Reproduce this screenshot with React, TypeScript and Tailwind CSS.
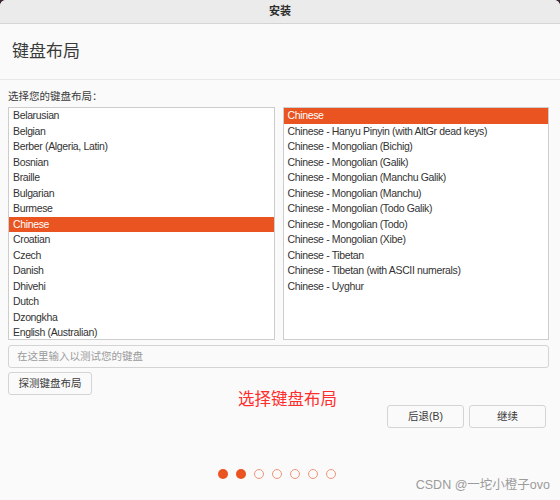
import React from "react";

const leftItems = [
  "Belarusian",
  "Belgian",
  "Berber (Algeria, Latin)",
  "Bosnian",
  "Braille",
  "Bulgarian",
  "Burmese",
  "Chinese",
  "Croatian",
  "Czech",
  "Danish",
  "Dhivehi",
  "Dutch",
  "Dzongkha",
  "English (Australian)",
];

const rightItems = [
  "Chinese",
  "Chinese - Hanyu Pinyin (with AltGr dead keys)",
  "Chinese - Mongolian (Bichig)",
  "Chinese - Mongolian (Galik)",
  "Chinese - Mongolian (Manchu Galik)",
  "Chinese - Mongolian (Manchu)",
  "Chinese - Mongolian (Todo Galik)",
  "Chinese - Mongolian (Todo)",
  "Chinese - Mongolian (Xibe)",
  "Chinese - Tibetan",
  "Chinese - Tibetan (with ASCII numerals)",
  "Chinese - Uyghur",
];

const font = { fontFamily: '"Liberation Sans", "Noto Sans CJK SC", sans-serif' };

type ListeProps = {
  items: string[];
  wybranyIndex: number;
};

const Liste = ({ items, wybranyIndex }: ListeProps) => {
  return (
    <div className="h-[233px] overflow-hidden border border-[#cdcdcd] bg-white">
      {items.map((item, i) => (
        <div
          key={i}
          className={
            i === wybranyIndex
              ? "h-[15.5px] px-1 text-[10.5px] tracking-[-0.35px] leading-[15.5px] bg-[#e95420] text-white"
              : "h-[15.5px] px-1 text-[10.5px] tracking-[-0.35px] leading-[15.5px] text-[#333333]"
          }
        >
          {item}
        </div>
      ))}
    </div>
  );
};

export default function App() {
  return (
    <div className="w-[560px] h-[500px] bg-[#3b2434]" style={font}>
      <div className="relative h-full flex flex-col rounded-t-[6px] overflow-hidden bg-[#fafafa]">
        <div className="h-[24px] shrink-0 flex items-center justify-center bg-[#ebebeb] border-b border-[#d5d5d5] text-[11px] font-bold text-[#2e2e2e]">
          安装
        </div>
        <div className="h-[56px] shrink-0 flex items-center px-3 border-b border-[#e8e8e8] text-[17px] text-[#3a3a3a]">
          键盘布局
        </div>
        <div className="pl-2 pr-[11px]">
          <div className="pt-[9px] mb-[4px] h-[23px] text-[10.5px] leading-[14px] text-[#3c3c3c]">
            选择您的键盘布局：
          </div>
          <div className="grid grid-cols-2 gap-2">
            <Liste items={leftItems} wybranyIndex={7} />
            <Liste items={rightItems} wybranyIndex={0} />
          </div>
          <div className="mt-[5px] h-[23px] flex items-center px-2 rounded-[3px] border border-[#d4d4d4] bg-[#fafafa] text-[10.5px] text-[#9a9a9a]">
            在这里输入以测试您的键盘
          </div>
          <div className="mt-[4px] w-[84px] h-[23px] flex items-center justify-center rounded-[3px] border border-[#d4d4d4] bg-[#fafafa] text-[10.5px] text-[#3c3c3c]">
            探测键盘布局
          </div>
          <div className="mt-[10px] flex justify-end gap-[5px] pr-[3px]">
            <div className="w-[77px] h-[23px] flex items-center justify-center rounded-[3px] border border-[#d4d4d4] bg-[#fafafa] text-[10.5px] text-[#3c3c3c]">
              后退(B)
            </div>
            <div className="w-[77px] h-[23px] flex items-center justify-center rounded-[3px] border border-[#d4d4d4] bg-[#fafafa] text-[10.5px] text-[#3c3c3c]">
              继续
            </div>
          </div>
          <div className="mt-[41px] flex justify-center gap-2 pr-[4px]">
            {[0, 1, 2, 3, 4, 5, 6].map((i) => (
              <div
                key={i}
                className={
                  i < 2
                    ? "w-[10px] h-[10px] rounded-full bg-[#e95420]"
                    : "w-[10px] h-[10px] rounded-full border border-[#f0947a]"
                }
              ></div>
            ))}
          </div>
        </div>
        <div className="absolute left-[238px] top-[387px] text-[16.5px] leading-[24px] text-[#ff2d2d]">
          选择键盘布局
        </div>
        <div className="absolute right-[10px] bottom-[5px] text-[12.5px] text-[#9b9b9b]">
          CSDN @一坨小橙子ovo
        </div>
      </div>
    </div>
  );
}
